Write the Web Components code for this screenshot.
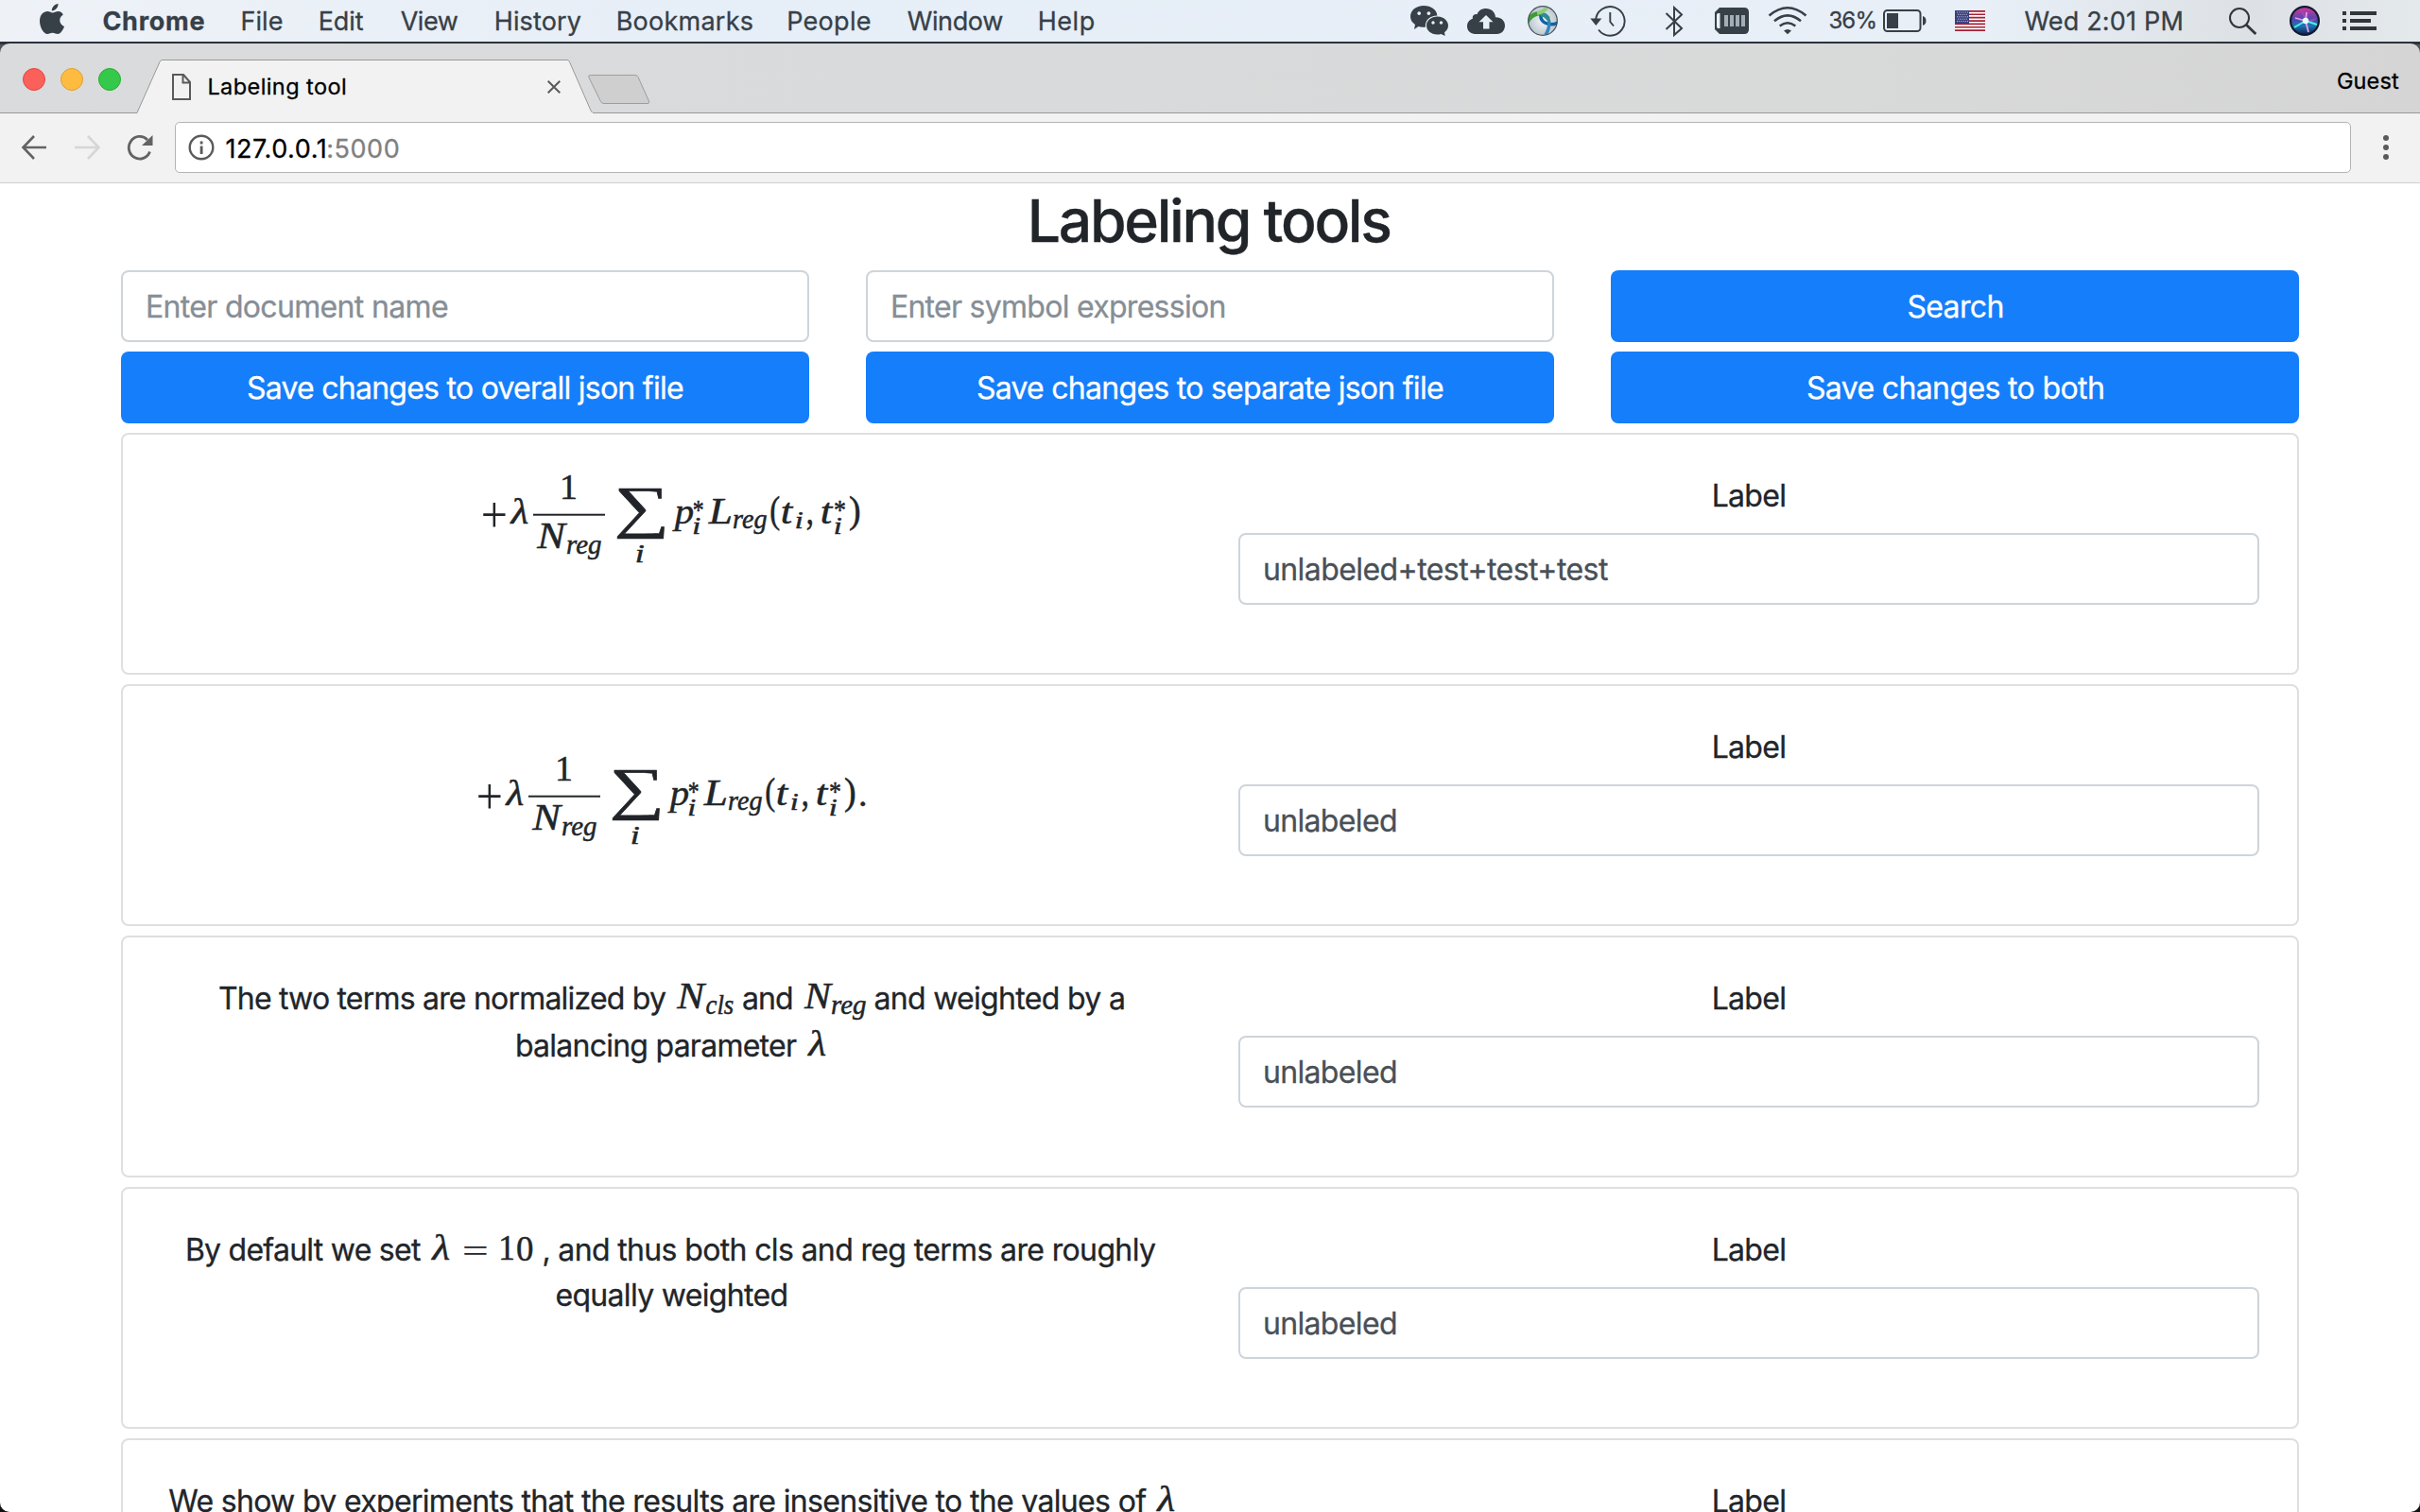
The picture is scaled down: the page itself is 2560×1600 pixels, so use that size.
<!DOCTYPE html>
<html lang="en">
<head>
<meta charset="utf-8">
<title>Labeling tool</title>
<style>
html,body{margin:0;height:100%;overflow:hidden;background:#20262e}
body{font-family:Inter,"Liberation Sans",sans-serif;color:#212529}
</style>
</head>
<body>
<desktop-screen></desktop-screen>
<script>
const pen = document.createElement('canvas').getContext('2d');

/* A run of text tracked to a given ink width. */
class TrackedText extends HTMLElement {
  connectedCallback() {
    if (this.shadowRoot) return;
    const w = parseFloat(this.getAttribute('w'));
    const root = this.attachShadow({mode: 'open'});
    root.innerHTML = `<style>:host{display:inline-block;white-space:nowrap;width:${w}px;flex:none;text-align:left;-webkit-text-stroke:.3px currentColor}span{display:inline-block;transform:translate(var(--dx,.4px),var(--dy,1px))}</style><span><slot></slot></span>`;
    const s = getComputedStyle(this);
    const t = this.textContent;
    pen.font = `${s.fontWeight} ${s.fontSize} ${s.fontFamily}`;
    const m = pen.measureText(t);
    const ink = m.actualBoundingBoxLeft + m.actualBoundingBoxRight;
    const span = root.querySelector('span');
    span.style.letterSpacing = ((w - ink) / (t.length - 1)).toFixed(3) + 'px';
    span.style.marginLeft = m.actualBoundingBoxLeft.toFixed(2) + 'px';
    span.style.marginRight = '-20px';
  }
}
customElements.define('tracked-text', TrackedText);

/* Math symbols: text, ink left, ink right, baseline, font size, upright flag, ink top, ink bottom. */
const FORMULAS = {
  loss: {w: 400, h: 100, g: [
    ['+',0,25,null,38,1,37,63],['λ',29.3,48.7,60,38,0,33.3,60],
    ['1',85,99,34,38,1,8.7,34],['N',57,91,86,38,0,59.7,86],['reg',90,126,92,29,0],
    ['∑',142.7,193.7,null,50,1,23,76.7],['i',163,171,101.3,27,0],
    ['p',200.5,223,60,38,0],['*',223.7,234.3,null,27,1,35,47],['i',223.5,231,71.3,26,0],
    ['L',238.5,263.5,60,38,0,33.5,60],['reg',266,301,65.3,29,0],
    ['(',305,314.5,null,38,1,31,68.7],['t',317,330,60,38,0],['i',332,339.5,65.3,26,0],[',',343.5,349.5,null,38,1,56,67],
    ['t',359,372,60,38,0],['*',373,384.5,null,27,1,35,47],['i',373,380.5,71.3,26,0],
    [')',389,399,null,38,1,31,68.7]], bar: [54,49.7,76,2]},
  ncls: {w: 61, h: 27, g: [['N',0,33,27,38,0,.8,27],['cls',31.5,61,33,29,0]]},
  nreg: {w: 66, h: 27, g: [['N',0,32,27,38,0,.8,27],['reg',30,66,33,29,0]]},
  lambda: {w: 19.5, h: 27, g: [['λ',0,19.5,27,38,0,.4,27]]},
  ten: {w: 107.5, h: 27, g: [['λ',0,19.5,27,38,0,.4,27],['=',34,59,null,38,1,13.6,22.4],['1',74,87,27,38,1,2,27],['0',91,107.5,27,38,1,2,27.5]]}
};
FORMULAS.lossdot = {...FORMULAS.loss, w: 411, g: [...FORMULAS.loss.g, ['.',405,410,null,38,1,55.5,60.5]]};

class MathFormula extends HTMLElement {
  connectedCallback() {
    if (this.shadowRoot) return;
    const f = FORMULAS[this.getAttribute('name')];
    let out = '';
    for (const [t, l, r, base, size, up, top, bottom] of f.g) {
      const fam = '"Liberation Serif",serif', st = up ? 'normal' : 'italic';
      pen.font = `${st} 400 ${size}px ${fam}`;
      const m = pen.measureText(t);
      const sx = (r - l) / (m.actualBoundingBoxLeft + m.actualBoundingBoxRight);
      const tx = l + m.actualBoundingBoxLeft * sx;
      const sy = top === undefined ? 1 : (bottom - top) / (m.actualBoundingBoxAscent + m.actualBoundingBoxDescent);
      const ty = top === undefined ? base : top + m.actualBoundingBoxAscent * sy;
      out += `<text transform="matrix(${sx.toFixed(4)} 0 0 ${sy.toFixed(4)} ${tx.toFixed(2)} ${ty.toFixed(2)})" font-size="${size}" font-style="${st}"${'+='.includes(t) ? ' stroke="none"' : ''}>${t}</text>`;
    }
    if (f.bar) out += `<rect x="${f.bar[0]}" y="${f.bar[1]}" width="${f.bar[2]}" height="${f.bar[3]}" stroke="none"/>`;
    this.attachShadow({mode: 'open'}).innerHTML =
      `<style>:host{display:inline-block;flex:none;height:${f.h}px;line-height:0}svg{overflow:visible;display:inline-block;fill:#212529;stroke:#212529;stroke-width:.5}text{font-family:"Liberation Serif",serif}</style><svg width="${f.w}" height="${f.h}">${out}</svg>`;
  }
}
customElements.define('math-formula', MathFormula);

/* Menu bar glyphs are drawn on the 44px bar height. */
const ICONS = {
  apple: [42, 26, `<path d="M61.500 4C61.800 7.500 58.500 11.600 54.800 11.500C54.400 8 57.900 4.300 61.500 4ZM66.800 15.600C61.400 19 62.600 25.800 68 28C66.300 32.500 63.500 36 61.100 36C58.900 36 58.200 34.700 55.500 34.700C52.800 34.700 52 36 50 36C46.500 36 42 29.300 42 22.300C42 15.500 46.200 12.100 50.200 12.100C52.600 12.100 54.300 13.500 55.700 13.500C57.100 13.500 59.200 12 61.900 12C63.900 12 65.800 13.200 66.800 15.600Z"/>`],
  wechat: [1492, 41, `<path fill-rule="evenodd" d="M1506 6C1514 6 1520 10.500 1520.400 16.500C1512.500 16.500 1507 22 1508 28.500C1505 29 1502.500 28.700 1500.500 28L1496 31L1497 26C1494 24 1492 21.200 1492 17.500C1492 11 1498 6 1506 6ZM1501.200 12.200A1.900 1.900 0 1 0 1501.210 12.200ZM1511.400 12.200A1.900 1.900 0 1 0 1511.410 12.200Z"/><path fill-rule="evenodd" d="M1520.500 17.500C1527 17.500 1532 21.800 1532 27C1532 30 1530.300 32.700 1528 34.200L1528.700 38L1524.500 35.900C1516 38 1509 33.500 1509 27C1509 21.800 1514 17.500 1520.500 17.500ZM1516 22.300A1.700 1.700 0 1 0 1516.010 22.300ZM1524.500 22.300A1.700 1.700 0 1 0 1524.510 22.300Z"/>`],
  cloud: [1552, 40, `<path fill-rule="evenodd" d="M1560.500 36C1555.500 36 1552 32.300 1552 28C1552 24 1554.300 20.800 1558 19.800C1557 17 1559.500 14.600 1562.500 15.200C1564 11 1567.500 9 1572 9C1577.500 9 1581.700 12.800 1582 18.200C1588 18 1592 22 1592 27C1592 32 1588.500 36 1583.500 36ZM1572 16L1564.500 23.300H1569V30.500H1575.500V23.300H1579.500Z"/>`],
  globe: [1616, 32, `<defs><radialGradient id="a"><stop stop-color="#f4f6f8"/><stop offset="1" stop-color="#b9c6cf"/></radialGradient><clipPath id="c"><circle cx="1632" cy="22" r="15.500"/></clipPath></defs><circle cx="1632" cy="22" r="15.500" fill="url(#a)"/><g clip-path="url(#c)" fill="none"><path d="M1615 24C1621 13 1631 11 1638 20" stroke="#3f9b35" stroke-width="4.500"/><path d="M1626 14C1632 13 1635 11 1638 5" stroke="#8fcb78" stroke-width="4"/><path d="M1630 16C1629 24 1639 28 1648 24" stroke="#0d62ac" stroke-width="3.500"/><path d="M1634 15C1641 21 1640 28 1635 37" stroke="#2f86c6" stroke-width="3.500"/><path d="M1630 17C1634 14 1640 20 1639 25" stroke="#2d8c98" stroke-width="2.500"/></g><circle cx="1632" cy="22" r="15.300" fill="none" stroke="#4a5258" stroke-width="1.200"/>`],
  time: [1682, 38, `<path d="M1688 22A15.300 15.300 0 1 1 1691 31.500M1703.300 13V23L1707 27.500" fill="none" stroke="currentColor" stroke-width="1.900"/><path d="M1682.300 19.500H1694.300L1688.300 27Z"/>`],
  bluetooth: [1761, 20, `<path d="M1762.500 14L1779 30L1771 37V8L1779 15.500L1762.500 31" fill="none" stroke="currentColor" stroke-width="2"/>`],
  memory: [1814, 36, `<path d="M1819 8H1845Q1850 8 1850 13V31Q1850 36 1845 36H1819L1814 31V13Z"/><path d="M1819.500 14V30H1817.500Q1816 30 1816 28V16Q1816 14 1817.500 14Z" fill="#e9eff6"/><path d="M1824 16h4v12h-4zM1830 16h4v12h-4zM1836 16h4v12h-4zM1842 16h4v12h-4z" fill="#a3adb6"/>`],
  wifi: [1870, 42, `<path d="M1871.500 16.500Q1891 0 1910.500 16.500M1877 22.300Q1891 10.500 1905 22.300M1882.700 27.500Q1891 21 1899.300 27.500" fill="none" stroke="currentColor" stroke-width="2.500"/><path d="M1887 32.500Q1891 29.500 1895 32.500L1891 36.200Z"/>`],
  battery: [1992, 46, `<rect x="1993" y="11" width="38.500" height="22" rx="3.500" fill="none" stroke="currentColor" stroke-width="2"/><rect x="1996" y="14" width="12" height="16"/><path d="M2034 17Q2037.500 18 2037.500 22T2034 27Z"/>`],
  flag: [2068, 32, `<path fill="#fff" d="M2068 11h32v22h-32z"/><path fill="#a31f34" d="M2068 11h32v1.700h-32zM2068 14.400h32v1.700h-32zM2068 17.800h32v1.700h-32zM2068 21.200h32v1.700h-32zM2068 24.500h32v1.700h-32zM2068 27.900h32v1.700h-32zM2068 31.300h32v1.700h-32z"/><path fill="#3b3f7c" d="M2068 11h15v14h-15z"/><path d="M2070 13H2082M2071 15.400H2082M2070 17.800H2082M2071 20.200H2082M2070 22.600H2082" stroke="#c9cbe0" stroke-width="1" stroke-dasharray="1 1.200"/>`],
  search: [2358, 30, `<circle cx="2369" cy="19" r="10" fill="none" stroke="currentColor" stroke-width="2"/><path d="M2376 26L2386.300 36" stroke="currentColor" stroke-width="2.800"/>`],
  siri: [2422, 32, `<defs><linearGradient id="s" x1="0" y1="0" x2="0" y2="1"><stop stop-color="#d2369f"/><stop offset=".45" stop-color="#4b49ae"/><stop offset=".7" stop-color="#1b75b4"/><stop offset="1" stop-color="#142257"/></linearGradient></defs><circle cx="2438" cy="22" r="16" fill="#111a2c"/><circle cx="2438" cy="22" r="13.800" fill="url(#s)"/><path d="M2439 22Q2434 13 2433 9Q2438 12 2439 22Q2445 20 2451 19Q2447 25 2439 22" fill="#9e4db8" opacity=".8"/><path d="M2439 22L2427 29M2439 22L2451 26" stroke="#4ff0e0" stroke-width="2"/><path d="M2439 22L2442 34M2439 22L2428 19M2439 22L2440 13" stroke="#ee9ce9" stroke-width="1.800"/><circle cx="2439" cy="22" r="3.200" fill="#e8fdff"/>`],
  list: [2478, 36, `<path d="M2478 12h4v4h-4zM2486 12h28v4h-28zM2478 20h4v4h-4zM2486 20h22v4h-22zM2478 28h4v4h-4zM2486 28h28v4h-28z"/>`]
};
class BarIcon extends HTMLElement {
  connectedCallback() {
    if (this.shadowRoot) return;
    const [x, w, art] = ICONS[this.getAttribute('name')];
    this.attachShadow({mode: 'open'}).innerHTML = `<style>:host{display:block;flex:none;height:44px}svg{display:block;fill:currentColor}</style><svg width="${w}" height="44" viewBox="${x} 0 ${w} 44">${art}</svg>`;
  }
}
customElements.define('bar-icon', BarIcon);

function element(name, html) {
  const tpl = document.createElement('template');
  tpl.innerHTML = html;
  customElements.define(name, class extends HTMLElement {
    constructor() {
      super();
      this.attachShadow({mode: 'open'}).append(tpl.content.cloneNode(true));
    }
  });
}

element('menu-bar', `<style>
:host{display:flex;height:44px;box-sizing:border-box;padding:0 46px 0 42px;background:linear-gradient(90deg,#eef2f7,#e6eef7 30%,#e8eff7 82%,#dde1e5 93%,#e4e9ec);color:#373f47;font-size:27px;line-height:44px}
div{display:flex}
.status{margin-left:auto}
tracked-text{height:44px}
</style>
<div>
<bar-icon name="apple"></bar-icon>
<tracked-text w="107" style="margin-left:41px;font-weight:700">Chrome</tracked-text>
<tracked-text w="42.3" style="margin-left:40px">File</tracked-text>
<tracked-text w="46" style="margin-left:40px">Edit</tracked-text>
<tracked-text w="61" style="margin-left:39px">View</tracked-text>
<tracked-text w="90" style="margin-left:40px">History</tracked-text>
<tracked-text w="142" style="margin-left:39px">Bookmarks</tracked-text>
<tracked-text w="86.500" style="margin-left:38.500px">People</tracked-text>
<tracked-text w="101.500" style="margin-left:39px">Window</tracked-text>
<tracked-text w="58" style="margin-left:38.500px">Help</tracked-text>
</div>
<div class="status">
<bar-icon name="wechat"></bar-icon>
<bar-icon name="cloud" style="margin-left:19px"></bar-icon>
<bar-icon name="globe" style="margin-left:24px"></bar-icon>
<bar-icon name="time" style="margin-left:34px"></bar-icon>
<bar-icon name="bluetooth" style="margin-left:41px"></bar-icon>
<bar-icon name="memory" style="margin-left:33px"></bar-icon>
<bar-icon name="wifi" style="margin-left:20px"></bar-icon>
<tracked-text w="48" style="margin-left:23px;font-size:24px;line-height:42px">36%</tracked-text>
<bar-icon name="battery" style="margin-left:9px"></bar-icon>
<bar-icon name="flag" style="margin-left:30px"></bar-icon>
<tracked-text w="167" style="margin-left:41px">Wed 2:01 PM</tracked-text>
<bar-icon name="search" style="margin-left:50px;color:#30363b"></bar-icon>
<bar-icon name="siri" style="margin-left:34px"></bar-icon>
<bar-icon name="list" style="margin-left:24px;color:#30363b"></bar-icon>
</div>`);

element('tab-strip', `<style>
:host{--dy:0px;display:flex;height:74px;border-radius:10px 10px 0 0;background:linear-gradient(90deg,#dadbdc,#d9dadb 45%,#d8d9d9 75%,#d5d5d5);box-shadow:inset 0 -1px #999;color:#000;font-size:23.500px}
.lights{display:flex;gap:16px;padding:26px 0 0 24px}
i{width:24px;height:24px;box-sizing:border-box;border-radius:50%;background:#fc605b;border:1px solid #e2463f}
i+i{background:#fdbc40;border-color:#e0a033}i+i+i{background:#34c94a;border-color:#2bac2f}
.tab{display:grid;margin-left:16px;width:484px;height:74px}
.tab>*{grid-area:1/1}
.row{display:flex;align-items:center;padding:18px 35px 0 38px;height:56px}
.row tracked-text{margin-left:19px;line-height:50px;height:51px}
.row .x{margin-left:auto}
svg{display:block}
.new{margin:32px 0 0 -7px}
.guest{margin:11px 22.500px 0 auto;line-height:58px;height:58px}
</style>
<div class="lights"><i></i><i></i><i></i></div>
<div class="tab">
<svg width="484" height="74" fill="#f2f2f2" stroke="#999"><path d="M0 73.500H.8Q1.500 72.500 2 71L25 19.500Q26 17.500 27.500 17.500H456Q457.500 17.500 458.500 19.500L481 71Q482 73.500 484 73.500" /><path d="M1.500 73.500H483" stroke="#f2f2f2"/></svg>
<div class="row">
<svg width="20" height="28" fill="none" stroke="#5a5a5a" stroke-width="2"><path d="M1 1H12L19 9V27H1ZM11.500 1V9.500H19"/></svg>
<tracked-text w="143.500">Labeling tool</tracked-text>
<svg class="x" width="14" height="14" stroke="#5a5a5a" stroke-width="2"><path d="M.7.7L13.300 13.300M13.300.7L.7 13.300"/></svg>
</div></div>
<svg class="new" width="68" height="34" fill="#cfcfcf" stroke="#9d9d9d"><path d="M3.500 1.500H51Q53 1.500 54 3.500L65.500 29Q66.500 31.500 64 31.500H18Q15.500 31.500 14.500 29.500L2 4Q1 1.500 3.500 1.500Z"/></svg>
<tracked-text class="guest" w="65">Guest</tracked-text>`);

element('tool-bar', `<style>
:host{display:flex;align-items:center;height:74px;box-sizing:border-box;background:#f2f2f2;border-bottom:1px solid #d0d0d0;padding:0 33px 2px 22px;font-size:27px;color:#000}
svg{display:block;flex:none}
.box{display:flex;align-items:center;flex:1;box-sizing:border-box;height:54px;margin:0 34px 0 22px;border:1px solid #b4b4b4;border-radius:5px;background:#fff;padding-left:13px;line-height:52px}
.port{color:#808080}
</style>
<svg width="28" height="28" fill="none" stroke="#636363" stroke-width="2.600"><path d="M14 2L2.500 14L14 26M2.500 14H27"/></svg>
<svg width="28" height="28" style="margin-left:28px" fill="none" stroke="#d6d6d6" stroke-width="2.600"><path d="M15 2L26.500 14L15 26M26.500 14H1"/></svg>
<svg width="30" height="28" style="margin-left:27px"><path d="M25.500 18.500A11.500 11.800 0 1 1 23 6" fill="none" stroke="#636363" stroke-width="2.800"/><path d="M28.500 1V12H17Z" fill="#636363"/></svg>
<div class="box">
<svg width="28" height="28"><circle cx="14" cy="14" r="12.300" fill="none" stroke="#5a5a5a" stroke-width="2.400"/><path d="M12.700 12.500h2.800v8.500h-2.800zM12.700 7.500h2.800v3h-2.800z" fill="#5a5a5a"/></svg>
<tracked-text w="104.300" style="margin-left:12px;--dy:1.500px">127.0.0.1</tracked-text><tracked-text class="port" w="74.500" style="margin-left:3.500px;--dy:1.500px">:5000</tracked-text>
</div>
<svg width="6" height="28" fill="#5a5a5a"><circle cx="3" cy="4" r="3"/><circle cx="3" cy="14" r="3"/><circle cx="3" cy="24" r="3"/></svg>`);

element('text-field', `<style>
:host{display:block;box-sizing:border-box;height:76px;border:2px solid #ced4da;border-radius:8px;background:#fff;padding:12px 25.500px;line-height:48px;font-size:32px;color:#495057;text-align:left}
:host([hint]){color:#868e96}
</style><slot></slot>`);

element('action-button', `<style>
:host{display:block;height:76px;box-sizing:border-box;border-radius:8px;background:#157efb;color:#fff;padding:14px 0;line-height:48px;font-size:32px;text-align:center}
</style><slot></slot>`);

element('math-line', `<style>
:host{display:flex;justify-content:center;align-items:baseline;height:var(--h,48px);line-height:48px;white-space:nowrap}
</style><slot></slot>`);

element('label-card', `<style>
:host{display:flex;gap:60px;height:256px;box-sizing:border-box;border:2px solid #dfdfdf;border-radius:8px;padding:40px;background:#fff;font-size:32px;line-height:48px;text-align:center}
.side{width:1080px;flex:none}
text-field{margin-top:16px}
.cap{height:48px}
</style>
<div class="side"><slot></slot></div>
<div class="side"><div class="cap"><tracked-text w="75.500">Label</tracked-text></div><text-field><slot name="value"></slot></text-field></div>`);

element('labeling-page', `<style>
:host{display:block;flex:1;background:#fff;padding:0 128px;overflow:hidden;border-radius:0 0 10px 10px}
h2{--dy:0px;--dx:1px;margin:0;height:92px;font-size:62.500px;font-weight:500;line-height:78px;text-align:center}
.grid{display:grid;grid-template-columns:repeat(3,728px);gap:10px 60px;margin-bottom:10px}
.cards{display:flex;flex-direction:column;gap:10px}
label-card{flex:none}
.formula{display:flex;justify-content:center}
</style>
<h2><tracked-text w="378.500">Labeling tools</tracked-text></h2>
<div class="grid">
<text-field hint><tracked-text w="318">Enter document name</tracked-text></text-field>
<text-field hint><tracked-text w="351.500">Enter symbol expression</tracked-text></text-field>
<action-button><tracked-text w="100">Search</tracked-text></action-button>
<action-button><tracked-text w="461">Save changes to overall json file</tracked-text></action-button>
<action-button><tracked-text w="493">Save changes to separate json file</tracked-text></action-button>
<action-button><tracked-text w="313">Save changes to both</tracked-text></action-button>
</div>
<div class="cards">
<label-card><div class="formula" style="margin-top:-6px"><math-formula name="loss"></math-formula></div><tracked-text slot="value" w="363">unlabeled+test+test+test</tracked-text></label-card>
<label-card><div class="formula" style="margin-top:26px"><math-formula name="lossdot"></math-formula></div><tracked-text slot="value" w="139">unlabeled</tracked-text></label-card>
<label-card>
<math-line style="--h:50px"><tracked-text w="473">The two terms are normalized by</tracked-text><math-formula name="ncls" style="margin:0 10px"></math-formula><tracked-text w="52">and</tracked-text><math-formula name="nreg" style="margin:0 9.500px 0 12px"></math-formula><tracked-text w="263.500">and weighted by a</tracked-text></math-line>
<math-line><tracked-text w="296">balancing parameter</tracked-text><math-formula name="lambda" style="margin-left:11.500px"></math-formula></math-line>
<tracked-text slot="value" w="139">unlabeled</tracked-text></label-card>
<label-card>
<math-line><tracked-text w="247">By default we set</tracked-text><math-formula name="ten" style="margin:0 12px 0 11px"></math-formula><tracked-text w="647.500">, and thus both cls and reg terms are roughly</tracked-text></math-line>
<math-line><tracked-text w="244">equally weighted</tracked-text></math-line>
<tracked-text slot="value" w="139">unlabeled</tracked-text></label-card>
<label-card>
<math-line><tracked-text w="1035">We show by experiments that the results are insensitive to the values of</tracked-text><math-formula name="lambda" style="margin-left:10px"></math-formula></math-line>
<tracked-text slot="value" w="139">unlabeled</tracked-text></label-card>
</div>`);

element('desktop-screen', `<style>
:host{display:flex;flex-direction:column;width:2560px;height:1600px;overflow:hidden;background:linear-gradient(#56616e 44px,#1c232b 45px,#1c232b 46px,#50565e 47px,#50565e 60px,#111 61px)}
.window{display:flex;flex-direction:column;flex:1;margin-top:2px;overflow:hidden;min-height:0}
menu-bar,tab-strip,tool-bar{flex:none}
</style>
<menu-bar></menu-bar>
<div class="window"><tab-strip></tab-strip><tool-bar></tool-bar><labeling-page></labeling-page></div>`);
</script>
</body>
</html>
